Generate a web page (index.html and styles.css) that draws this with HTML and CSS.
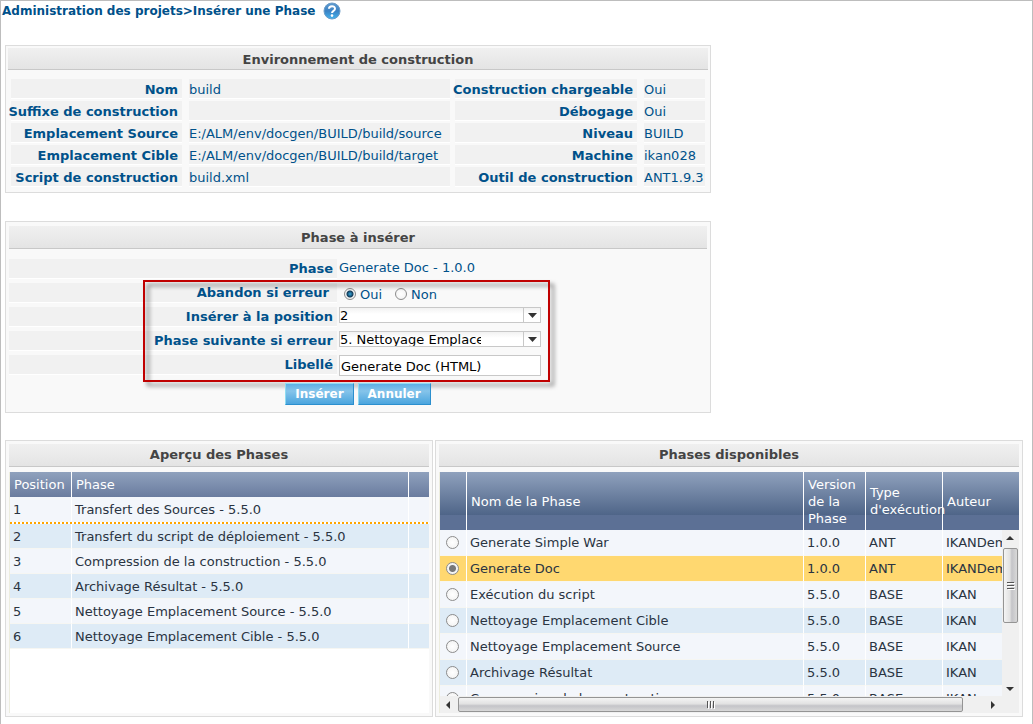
FILE: index.html
```html
<!DOCTYPE html>
<html lang="fr">
<head>
<meta charset="utf-8">
<title>Insérer une Phase</title>
<link rel="stylesheet" href="styles.css">
</head>
<body>
<header class="topbar">
  <h1 class="crumb">Administration des projets&gt;Insérer une Phase</h1>
  <button class="help" type="button" aria-label="Aide">
    <svg width="18" height="18" viewBox="0 0 18 18" aria-hidden="true">
      <defs>
        <linearGradient id="ball" x1="0" y1="0" x2="0" y2="1">
          <stop offset="0" stop-color="#5f9bd0"/><stop offset=".5" stop-color="#3b82c4"/><stop offset="1" stop-color="#45b4ee"/>
        </linearGradient>
      </defs>
      <circle cx="9" cy="9" r="8" fill="url(#ball)" stroke="#6c9cc8"/>
      <path d="M6 6.8C6 3.3 12 3.3 12 6.7C12 9 9 8.8 9 11" fill="none" stroke="#fff" stroke-width="2"/>
      <circle cx="9" cy="13.6" r="1.3" fill="#fff"/>
    </svg>
  </button>
</header>

<main class="page">
  <div class="upper">
    <section class="panel environment">
      <h2 class="title">Environnement de construction</h2>
      <div class="facts">
        <dl class="list list-main">
          <dt>Nom</dt><dd>build</dd>
          <dt>Suffixe de construction</dt><dd></dd>
          <dt>Emplacement Source</dt><dd>E:/ALM/env/docgen/BUILD/build/source</dd>
          <dt>Emplacement Cible</dt><dd>E:/ALM/env/docgen/BUILD/build/target</dd>
          <dt>Script de construction</dt><dd>build.xml</dd>
        </dl>
        <dl class="list list-side">
          <dt>Construction chargeable</dt><dd>Oui</dd>
          <dt>Débogage</dt><dd>Oui</dd>
          <dt>Niveau</dt><dd>BUILD</dd>
          <dt>Machine</dt><dd>ikan028</dd>
          <dt>Outil de construction</dt><dd>ANT1.9.3</dd>
        </dl>
      </div>
    </section>

    <form class="panel insert">
      <h2 class="title">Phase à insérer</h2>
      <div class="fields">
        <span class="label">Phase</span>
        <span class="value">Generate Doc - 1.0.0</span>
        <span class="label label-radio" id="abort">Abandon si erreur</span>
        <span class="choices" role="radiogroup" aria-labelledby="abort">
          <label class="choice"><input class="radio small" type="radio" name="abort" checked>Oui</label>
          <label class="choice"><input class="radio small" type="radio" name="abort">Non</label>
        </span>
        <label class="label" for="position">Insérer à la position</label>
        <select class="combo" id="position"><option>2</option></select>
        <label class="label" for="next">Phase suivante si erreur</label>
        <select class="combo" id="next"><option>5. Nettoyage Emplacement Source</option></select>
        <label class="label" for="caption">Libellé</label>
        <input class="textbox" id="caption" type="text" value="Generate Doc (HTML)">
        <div class="marker"></div>
      </div>
      <div class="actions">
        <button class="btn" type="button">Insérer</button>
        <button class="btn" type="button">Annuler</button>
      </div>
    </form>
  </div>

  <div class="lower">
    <section class="panel">
      <h2 class="title">Aperçu des Phases</h2>
      <div class="tablebox">
        <table class="grid overview">
          <colgroup><col class="c-pos"><col><col class="c-end"></colgroup>
          <thead><tr><th>Position</th><th>Phase</th><th></th></tr></thead>
          <tbody>
            <tr><td>1</td><td>Transfert des Sources - 5.5.0</td><td></td></tr>
            <tr class="insertion"><td colspan="3"></td></tr>
            <tr class="alt"><td>2</td><td>Transfert du script de déploiement - 5.5.0</td><td></td></tr>
            <tr><td>3</td><td>Compression de la construction - 5.5.0</td><td></td></tr>
            <tr class="alt"><td>4</td><td>Archivage Résultat - 5.5.0</td><td></td></tr>
            <tr><td>5</td><td>Nettoyage Emplacement Source - 5.5.0</td><td></td></tr>
            <tr class="alt"><td>6</td><td>Nettoyage Emplacement Cible - 5.5.0</td><td></td></tr>
          </tbody>
        </table>
      </div>
    </section>

    <section class="panel">
      <h2 class="title">Phases disponibles</h2>
      <div class="tablebox">
        <div class="viewport">
          <table class="grid available">
            <colgroup><col class="c-pick"><col><col class="c-ver"><col class="c-type"><col class="c-auth"></colgroup>
            <thead><tr><th></th><th>Nom de la Phase</th><th>Version de la Phase</th><th>Type d'exécution</th><th>Auteur</th></tr></thead>
            <tbody>
              <tr><td><input class="radio" type="radio" name="phase" aria-label="Generate Simple War"></td><td>Generate Simple War</td><td>1.0.0</td><td>ANT</td><td>IKANDemo</td></tr>
              <tr class="selected"><td><input class="radio" type="radio" name="phase" aria-label="Generate Doc" checked></td><td>Generate Doc</td><td>1.0.0</td><td>ANT</td><td>IKANDemo</td></tr>
              <tr><td><input class="radio" type="radio" name="phase" aria-label="Exécution du script"></td><td>Exécution du script</td><td>5.5.0</td><td>BASE</td><td>IKAN</td></tr>
              <tr class="alt"><td><input class="radio" type="radio" name="phase" aria-label="Nettoyage Emplacement Cible"></td><td>Nettoyage Emplacement Cible</td><td>5.5.0</td><td>BASE</td><td>IKAN</td></tr>
              <tr><td><input class="radio" type="radio" name="phase" aria-label="Nettoyage Emplacement Source"></td><td>Nettoyage Emplacement Source</td><td>5.5.0</td><td>BASE</td><td>IKAN</td></tr>
              <tr class="alt"><td><input class="radio" type="radio" name="phase" aria-label="Archivage Résultat"></td><td>Archivage Résultat</td><td>5.5.0</td><td>BASE</td><td>IKAN</td></tr>
              <tr><td><input class="radio" type="radio" name="phase" aria-label="Compression de la construction"></td><td>Compression de la construction</td><td>5.5.0</td><td>BASE</td><td>IKAN</td></tr>
            </tbody>
          </table>
          <div class="vbar">
            <svg width="16" height="16" viewBox="0 0 16 16"><path d="M4 10L8 6L12 10Z" fill="#333"/></svg>
            <div class="thumb vthumb"><svg width="8" height="8" viewBox="0 0 8 8"><path d="M0 .5h7M0 3.5h7M0 6.5h7" stroke="#555"/><path d="M1 1.5h7M1 4.5h7M1 7.5h7" stroke="#fff"/></svg></div>
            <svg class="vdown" width="16" height="16" viewBox="0 0 16 16"><path d="M4 7L8 11L12 7Z" fill="#333"/></svg>
          </div>
        </div>
        <div class="hbar">
          <svg width="18" height="16" viewBox="0 0 18 16"><path d="M10 4L6 8L10 12Z" fill="#333"/></svg>
          <div class="thumb hthumb"><svg width="8" height="8" viewBox="0 0 8 8"><path d="M.5 0v7M3.5 0v7M6.5 0v7" stroke="#555"/><path d="M1.5 1v7M4.5 1v7M7.5 1v7" stroke="#fff"/></svg></div>
          <svg class="hright" width="56" height="16" viewBox="0 0 56 16"><path d="M28 4L32 8L28 12Z" fill="#333"/></svg>
        </div>
      </div>
    </section>
  </div>
</main>
</body>
</html>
```

FILE: styles.css
```css
* { box-sizing: border-box; }

body {
  margin: 0;
  min-height: 100vh;
  border: 1px solid #bdbdbd;
  background: #fff;
  color: #00518a;
  font: 13px/18px Verdana, "DejaVu Sans", sans-serif;
}

.topbar {
  display: flex;
  align-items: center;
  gap: 8px;
  height: 20px;
  padding-left: 1px;
}
.crumb { margin: 0; font-size: 12px; line-height: 20px; white-space: nowrap; }
.help {
  width: 18px;
  height: 18px;
  padding: 0;
  border: 0;
  background: none;
}
.help svg { display: block; }

.page { padding: 24px 9px 7px 4px; }
.upper {
  display: grid;
  grid-template-columns: 706fr 312fr;
  row-gap: 28px;
}
.upper > * { grid-column: 1; }
.lower {
  display: grid;
  grid-template-columns: 428fr 588fr;
  gap: 2px;
  margin-top: 27px;
}

.panel {
  min-width: 0;
  padding: 3px;
  border: 1px solid #dcdcdc;
  background: #f9f9f9;
}
.title {
  height: 23px;
  margin: 0;
  border-bottom: 1px solid #c8c8c8;
  background: linear-gradient(#f0f0f0, #e4e4e4);
  color: #444;
  font-size: 13px;
  line-height: 22px;
  text-align: center;
}

/* Environment summary */
.environment { padding: 2px 2px 5px; }
.environment .title { height: 22px; line-height: 24px; }
.facts { display: flex; gap: 5px; padding: 9px 3px 0; }
.list {
  display: grid;
  gap: 2px 7px;
  grid-auto-rows: 20px;
  margin: 0;
  white-space: nowrap;
}
.list-main { flex: 1; grid-template-columns: 171px 1fr; }
.list-side { grid-template-columns: 182px 61px; }
.list dt, .list dd {
  margin: 0;
  border-bottom: 1px solid #fff;
  background: #f1f1f1;
  line-height: 22px;
}
.list dt {
  display: flex;
  justify-content: flex-end;
  padding-right: 4px;
  font-weight: bold;
}

/* Insertion form */
.insert { padding: 4px 3px 7px; }
.insert .title { line-height: 24px; }
.fields {
  position: relative;
  display: grid;
  grid-template-columns: 328px 1fr;
  grid-auto-rows: minmax(20px, auto);
  gap: 4px 2px;
  padding-top: 10px;
}
.label {
  height: 20px;
  padding-right: 4px;
  border-bottom: 1px solid #fff;
  background: #f1f1f1;
  font-weight: bold;
  line-height: 20px;
  text-align: right;
}
.label-radio { padding-right: 8px; }
.choices { display: flex; gap: 13px; height: 20px; padding: 2px 0 0 5px; }
.choice { display: flex; align-items: center; gap: 4px; height: 20px; }
.combo, .textbox {
  width: 202px;
  margin: 0;
  border: 1px solid #c8c8c8;
  border-radius: 0;
  background: #fff;
  color: #000;
  font: inherit;
}
.combo {
  height: 16px;
  padding: 1px 59px 0 0;
  appearance: none;
  line-height: 14px;
  background:
    url("data:image/svg+xml,%3Csvg xmlns='http://www.w3.org/2000/svg' width='17' height='14'%3E%3Cpath d='M.5 0v14' stroke='%23c8c8c8'/%3E%3Cpath d='M5 5h9L9.500 10Z' fill='%23333'/%3E%3C/svg%3E") right top no-repeat,
    linear-gradient(#f2f2f2, #fff 6px);
}
.textbox { height: 21px; padding: 2px 1px 0; }

.marker {
  position: absolute;
  z-index: 1;
  top: 31px;
  left: 134px;
  width: 407px;
  height: 102px;
  border: 2px solid #c00000;
  filter: drop-shadow(4px 4px 2px rgba(0, 0, 0, .5));
  pointer-events: none;
}

.actions {
  position: relative;
  z-index: 2;
  display: flex;
  justify-content: center;
  gap: 4px;
  margin-top: 7px;
}
.btn {
  height: 22px;
  padding: 0 9px;
  border: 1px solid;
  border-color: #8fdcf2 #2b8fce #2b8fce #8fdcf2;
  background: linear-gradient(#5fb0e4, #85c4ea 35%, #4ba5de);
  color: #fff;
  font: bold 12px/20px Verdana, "DejaVu Sans", sans-serif;
}

/* Tables */
.tablebox {
  height: 241px;
  margin-top: 5px;
  border-left: 1px solid #ededde;
  background: #fff;
}
.grid {
  width: 100%;
  border-collapse: separate;
  border-spacing: 0;
  table-layout: fixed;
  color: #2a3442;
}
.grid th, .grid td {
  padding: 0 0 0 3px;
  border-left: 1px solid #fff;
  text-align: left;
  white-space: nowrap;
}
.grid th { font-weight: normal; color: #fff; padding-left: 4px; }
.grid th:first-child, .grid td:first-child { border-left: 0; }
.grid td { height: 25px; border-bottom: 1px solid #f6f6f2; background: #f3f6fb; background-clip: padding-box; }
.grid .alt td { background-color: #deebf6; }
.grid .selected td { background-color: #ffd870; }

.overview th { height: 25px; background: linear-gradient(#8fa1bd, #6a7c9f); }
.overview td { padding-top: 2px; }
.overview .insertion td {
  height: 2px;
  padding: 0;
  border: 0;
  background: repeating-linear-gradient(90deg, #ffa500 0 2px, #fff 2px 4px);
}
.c-pos { width: 61px; }
.c-end { width: 21px; }

.viewport { position: relative; height: 224px; overflow: hidden; }
.available th {
  height: 58px;
  background: linear-gradient(#8fa1bd, #4f6588 43px, #5c7095 43px);
  line-height: 17px;
  white-space: normal;
}
.available td { height: 26px; }
.available td:first-child { padding: 0; }
.c-pick { width: 26px; }
.c-ver { width: 62px; }
.c-type { width: 77px; }
.c-auth { width: 77px; }

.radio {
  display: block;
  width: 13px;
  height: 13px;
  margin: 0 auto 0 6px;
  appearance: none;
  border: 1px solid #8c8c8c;
  border-radius: 50%;
  background: radial-gradient(#fff, #f0f0f0);
}
.radio:checked {
  background: radial-gradient(circle, #777 0 3px, #f4f4f4 4px);
}
.radio.small { width: 12px; height: 12px; margin: 0 0 2px; }
.radio.small:checked {
  background: radial-gradient(circle, #39aade 0, #123a58 3px, #f4f4f4 4px);
}

/* Scroll bars */
.vbar {
  position: absolute;
  top: 58px;
  right: 0;
  bottom: 0;
  display: flex;
  flex-direction: column;
  width: 17px;
  background: #f0f0f0;
}
.vbar svg, .hbar svg { display: block; flex: none; }
.vdown { margin-top: auto; }
.hbar { display: flex; height: 17px; background: #f0f0f0; align-items: center; }
.thumb {
  display: flex;
  align-items: center;
  justify-content: center;
  border: 1px solid #949494;
  border-radius: 2px;
}
.vthumb {
  width: 15px;
  height: 75px;
  margin: 2px 0 0 1px;
  background: linear-gradient(90deg, #f4f4f4, #e2e2e2 45%, #c4c4c8 60%, #d8d8d8);
}
.hthumb {
  flex: 1;
  height: 15px;
  background: linear-gradient(#f4f4f4, #e2e2e2 45%, #c4c4c8 60%, #d8d8d8);
}
```
